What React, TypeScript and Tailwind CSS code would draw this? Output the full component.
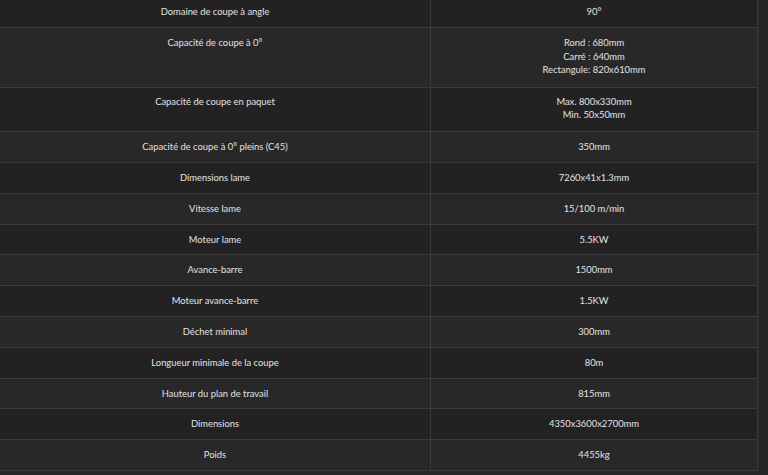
const rows: { label: string; value: string[] }[] = [
  { label: "Domaine de coupe à angle", value: ["90°"] },
  { label: "Capacité de coupe à 0°", value: ["Rond : 680mm", "Carré : 640mm", "Rectangule: 820x610mm"] },
  { label: "Capacité de coupe en paquet", value: ["Max. 800x330mm", "Min. 50x50mm"] },
  { label: "Capacité de coupe à 0° pleins (C45)", value: ["350mm"] },
  { label: "Dimensions lame", value: ["7260x41x1.3mm"] },
  { label: "Vitesse lame", value: ["15/100 m/min"] },
  { label: "Moteur lame", value: ["5.5KW"] },
  { label: "Avance-barre", value: ["1500mm"] },
  { label: "Moteur avance-barre", value: ["1.5KW"] },
  { label: "Déchet minimal", value: ["300mm"] },
  { label: "Longueur minimale de la coupe", value: ["80m"] },
  { label: "Hauteur du plan de travail", value: ["815mm"] },
  { label: "Dimensions", value: ["4350x3600x2700mm"] },
  { label: "Poids", value: ["4455kg"] },
];

export default function App() {
  return (
    <div className="h-[475px] w-[768px] overflow-hidden bg-[#272727] font-['Lato',sans-serif] text-[9.4px] leading-[13.8px] text-[#e2e2e2]">
      <div className="-mt-[3px] w-[758px]">
        {rows.map((row, i) => (
          <div
            key={row.label}
            className={`flex border-b border-[#3a3a3a] ${i % 2 === 0 ? "bg-[#222222]" : "bg-[#282828]"}`}
          >
            <div className={`w-[431px] shrink-0 border-r border-[#3a3a3a] text-center ${i === 2 ? "pt-[7px] pb-[9px]" : "py-2"}`}>
              {row.label}
            </div>
            <div
              className={`flex-1 border-r border-[#3a3a3a] text-center ${
                i === 1 ? "pt-2 pb-[9.5px]" : i === 2 ? "pt-[7px] pb-[9px]" : "py-2"
              }`}
            >
              {row.value.map((v) => (
                <div key={v}>{v}</div>
              ))}
            </div>
          </div>
        ))}
      </div>
    </div>
  );
}
